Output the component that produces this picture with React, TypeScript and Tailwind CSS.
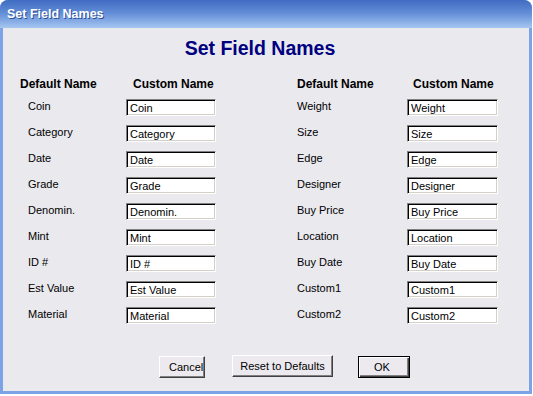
const leftFields = [
  ["Coin", "Coin"],
  ["Category", "Category"],
  ["Date", "Date"],
  ["Grade", "Grade"],
  ["Denomin.", "Denomin."],
  ["Mint", "Mint"],
  ["ID #", "ID #"],
  ["Est Value", "Est Value"],
  ["Material", "Material"],
];

const rightFields = [
  ["Weight", "Weight"],
  ["Size", "Size"],
  ["Edge", "Edge"],
  ["Designer", "Designer"],
  ["Buy Price", "Buy Price"],
  ["Location", "Location"],
  ["Buy Date", "Buy Date"],
  ["Custom1", "Custom1"],
  ["Custom2", "Custom2"],
];

const inputClass =
  "h-[17px] bg-white border border-t-[#808080] border-l-[#808080] border-b-white border-r-white shadow-[inset_1px_1px_0_#000000,inset_-1px_-1px_0_#d4d0c8] pl-[3px] text-[11px] leading-[13px] text-black outline-none font-['Liberation_Sans',Arial,sans-serif]";

const App = () => {
  return (
    <div className="w-[533px] h-[396px] bg-white font-['Liberation_Sans',Arial,sans-serif] text-black">
      <div className="w-[532px] h-[394px] flex flex-col rounded-t-[8px] overflow-hidden bg-[#7ca3e6]">
        {/* title bar */}
        <div className="h-[28px] shrink-0 flex items-center pl-[7px] pt-[1px] bg-gradient-to-b from-[#3f6cc2] via-[#6690d8] to-[#a7c7f1] text-white font-bold text-[12.5px] [text-shadow:1px_1px_0_#2c4f9a]">
          Set Field Names
        </div>

        <div className="flex-1 mx-[3px] mb-[3px] bg-[#eae9ee] flex flex-col">
          <div className="h-[24px] mt-[8px] flex justify-center pr-[12px] text-[19.5px] leading-[24px] font-bold text-[#000080]">
            Set Field Names
          </div>

          <div className="flex mt-[17px]">
            {/* left column */}
            <div className="flex flex-col ml-[17px]">
              <div className="flex h-[14px] leading-[14px] text-[12px] font-bold">
                <div className="w-[113px]">Default Name</div>
                <div>Custom Name</div>
              </div>
              <div className="flex flex-col gap-[9px] mt-[8px]">
                {leftFields.map(([label, value]) => (
                  <div key={label} className="flex h-[17px]">
                    <div className="w-[106px] pl-[8px] text-[11px] leading-[15px]">{label}</div>
                    <input className={inputClass + " w-[90px]"} defaultValue={value} />
                  </div>
                ))}
              </div>
            </div>

            {/* right column */}
            <div className="flex flex-col ml-[81px]">
              <div className="flex h-[14px] leading-[14px] text-[12px] font-bold">
                <div className="w-[116px]">Default Name</div>
                <div>Custom Name</div>
              </div>
              <div className="flex flex-col gap-[9px] mt-[8px]">
                {rightFields.map(([label, value]) => (
                  <div key={label} className="flex h-[17px]">
                    <div className="w-[110px] text-[11px] leading-[15px]">{label}</div>
                    <input className={inputClass + " w-[91px]"} defaultValue={value} />
                  </div>
                ))}
              </div>
            </div>
          </div>

          <div className="flex items-start mt-[32px] ml-[156px] text-[11px]">
            <button className="h-[22px] w-[46px] bg-[#eceaef] border border-t-white border-l-white border-b-[#404040] border-r-[#404040] shadow-[inset_-1px_-1px_0_#808080] text-left pl-[9px] pr-0 whitespace-nowrap overflow-visible leading-[18px]">
              Cancel
            </button>
            <button className="h-[22px] w-[101px] ml-[27px] -mt-[1px] bg-[#eceaef] border border-t-white border-l-white border-b-[#404040] border-r-[#404040] shadow-[inset_-1px_-1px_0_#808080] whitespace-nowrap leading-[18px]">
              Reset to Defaults
            </button>
            <button className="h-[22px] w-[52px] ml-[25px] bg-[#eceaef] border border-black shadow-[inset_1px_1px_0_#ffffff,inset_-1px_-1px_0_#404040,inset_-2px_-2px_0_#808080] leading-[18px] pr-[4px]">
              OK
            </button>
          </div>
        </div>
      </div>
    </div>
  );
};

export default App;
